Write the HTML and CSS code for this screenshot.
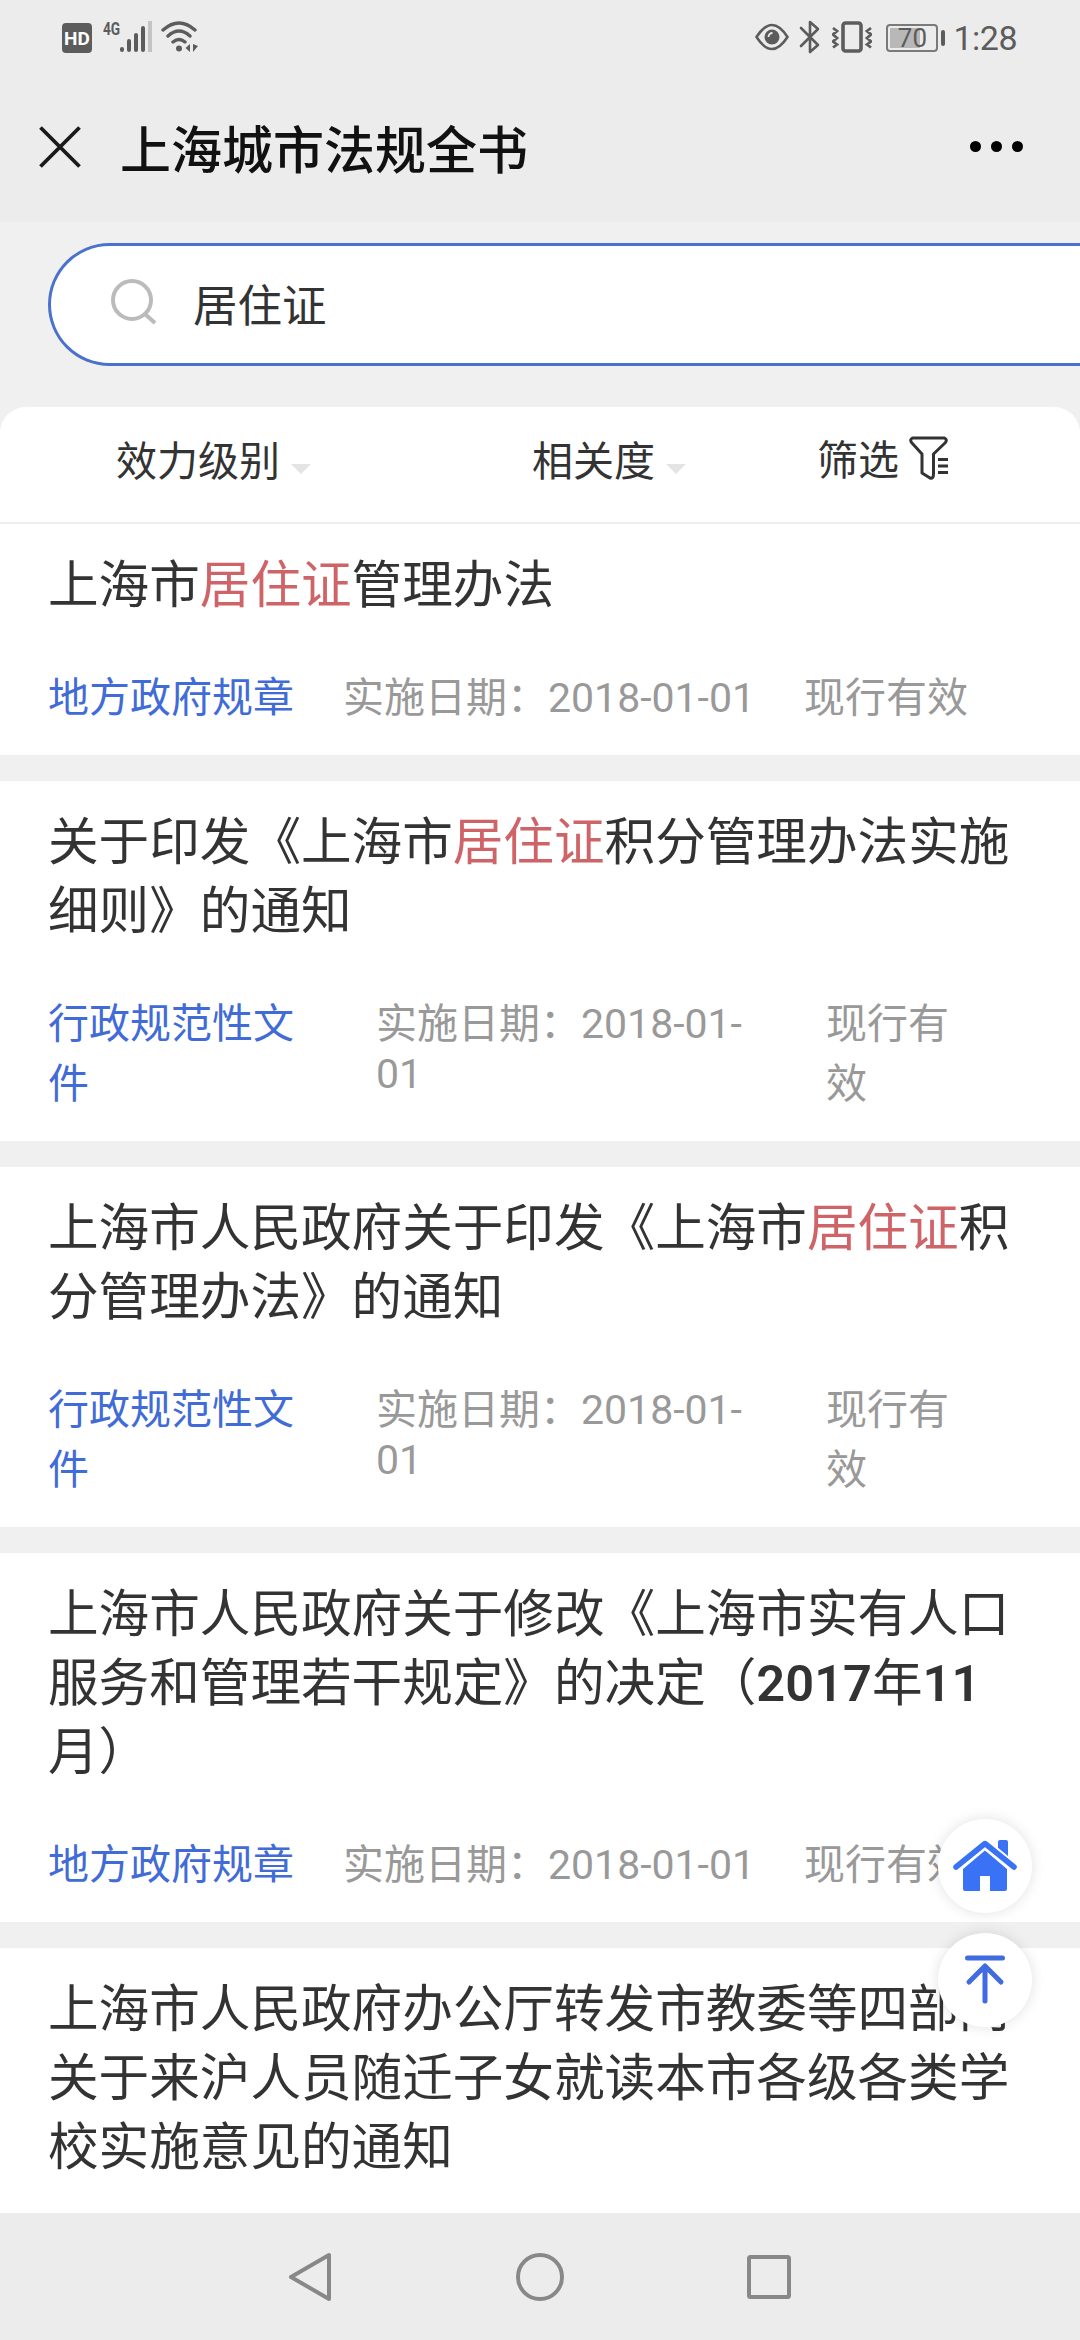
FILE: index.html
```html
<!DOCTYPE html>
<html lang="zh-CN">
<head>
  <meta charset="UTF-8" />
  <meta name="viewport" content="width=device-width, initial-scale=1.0"/>
  <title>上海城市法规全书</title>
  <link rel="stylesheet" href="styles.css">
</head>
<body>

  <div class="status-bar">
    <div class="status-left">
      <span class="hd">HD</span>
      <span class="net">4G</span>
      <svg class="signal" width="32" height="32" viewBox="0 0 32 32">
        <g stroke="#5c5c5c" stroke-width="4" stroke-linecap="round">
          <path d="M2 28v1M9 20v9M16 14v15M23 7v22"/>
        </g>
        <path d="M30 0v31" stroke="#c4c4c4" stroke-width="4"/>
      </svg>
      <svg class="wifi" width="38" height="32" viewBox="0 0 38 32">
        <g fill="none" stroke="#5c5c5c" stroke-width="3.4" stroke-linecap="round">
          <path d="M2 9Q18 -5 34 9M7 15Q18 5 29 15M12 21Q18 16 24 21"/>
        </g>
        <circle cx="18" cy="27.500" r="3" fill="#5c5c5c"/>
        <path d="M29 23v8l-4.500-4zM32 23v8l5-6z" fill="#5c5c5c"/>
      </svg>
    </div>
    <div class="status-right">
      <svg width="34" height="34" viewBox="0 0 34 34">
        <path d="M1.500 17Q17-7 32.500 17Q17 41 1.500 17z" fill="none" stroke="#5c5c5c" stroke-width="2.600" stroke-linejoin="round"/>
        <circle cx="17" cy="17" r="7.500" fill="#5c5c5c"/>
        <path d="M13.500 17a4 4 0 0 1 4-4" fill="none" stroke="#ececec" stroke-width="1.800"/>
      </svg>
      <svg class="bluetooth" width="22" height="34" viewBox="0 0 22 34">
        <path d="M2 8l17 17-8 7V2l8 7L2 26" fill="none" stroke="#5c5c5c" stroke-width="2.600" stroke-linejoin="round" stroke-linecap="round"/>
      </svg>
      <svg class="vibrate" width="40" height="34" viewBox="0 0 40 34">
        <rect x="11" y="3" width="18" height="28" rx="2.500" fill="none" stroke="#5c5c5c" stroke-width="3.600"/>
        <path d="M1 8l4 3-4 3.500 4 3.500-4 3.500 4 3-4 3M39 8l-4 3 4 3.500-4 3.500 4 3.500-4 3 4 3" fill="none" stroke="#5c5c5c" stroke-width="2.800"/>
      </svg>
      <span class="battery">70</span>
      <span class="time">1:28</span>
    </div>
  </div>

  <div class="title-bar">
    <svg class="close" width="42" height="42" viewBox="0 0 42 42">
      <path d="M1.500 1.500l39 39M40.500 1.500l-39 39" stroke="#1a1a1a" stroke-width="3.800"/>
    </svg>
    <h1>上海城市法规全书</h1>
    <div class="more"><i></i><i></i><i></i></div>
  </div>

  <div class="search-wrap">
    <div class="search">
      <svg width="46" height="46" viewBox="0 0 46 46">
        <g fill="none" stroke="#bbb" stroke-width="4">
          <circle cx="21" cy="21" r="19"/>
          <path d="M34 35l10 9"/>
        </g>
      </svg>
      <span>居住证</span>
    </div>
  </div>

  <div class="filters">
    <div class="filter level">效力级别<i class="arrow"></i></div>
    <div class="filter relate">相关度<i class="arrow"></i></div>
    <div class="filter pick">筛选
      <svg width="40" height="44" viewBox="0 0 40 44">
        <path d="M3.500 2h32q3 1.500 1 4.500L24.500 18v20q0 5-3.500 4L13 37V18L2.500 6.500q-2-3 1-4.500z" fill="none" stroke="#333" stroke-width="3" stroke-linejoin="round"/>
        <path d="M29 23.500h10M29 30h10M29 36.500h10" stroke="#333" stroke-width="3"/>
      </svg>
    </div>
  </div>

  <div class="list">
    <div class="item">
      <h2>上海市<em>居住证</em>管理办法</h2>
      <div class="meta">
        <span class="type">地方政府规章</span>
        <span class="date">实施日期：2018-01-01</span>
        <span class="state">现行有效</span>
      </div>
    </div>
    <div class="item">
      <h2>关于印发《上海市<em>居住证</em>积分管理办法实施细则》的通知</h2>
      <div class="meta wrap">
        <span class="type">行政规范性文件</span>
        <span class="date">实施日期：2018-01-01</span>
        <span class="state">现行有效</span>
      </div>
    </div>
    <div class="item">
      <h2>上海市人民政府关于印发《上海市<em>居住证</em>积分管理办法》的通知</h2>
      <div class="meta wrap">
        <span class="type">行政规范性文件</span>
        <span class="date">实施日期：2018-01-01</span>
        <span class="state">现行有效</span>
      </div>
    </div>
    <div class="item">
      <h2>上海市人民政府关于修改《上海市实有人口服务和管理若干规定》的决定（<b>2017</b>年<b>11</b>月）</h2>
      <div class="meta">
        <span class="type">地方政府规章</span>
        <span class="date">实施日期：2018-01-01</span>
        <span class="state">现行有效</span>
      </div>
    </div>
    <div class="item">
      <h2>上海市人民政府办公厅转发市教委等四部门关于来沪人员随迁子女就读本市各级各类学校实施意见的通知</h2>
    </div>
  </div>

  <div class="float-btns">
    <div class="float-btn">
      <svg width="64" height="52" viewBox="0 0 64 52">
        <g fill="#3a72f5">
          <path d="M45 2q0-2 2-2h6q2 0 2 2v20L45 13z"/>
          <path d="M10 29L32 10.500 54 29v20q0 2-2 2H37V36H27v15H12q-2 0-2-2z"/>
        </g>
        <path d="M3 27.500L32 3.500l29 24" fill="none" stroke="#fff" stroke-width="10"/>
        <path d="M3 27L32 3.500 61 27" fill="none" stroke="#3a72f5" stroke-width="5.500" stroke-linecap="round" stroke-linejoin="round"/>
      </svg>
    </div>
    <div class="float-btn">
      <svg width="42" height="50" viewBox="0 0 42 50">
        <path d="M3.500 3h35M21 12v34M5 27l16-16 16 16" fill="none" stroke="#416be0" stroke-width="5" stroke-linecap="round" stroke-linejoin="round"/>
      </svg>
    </div>
  </div>

  <div class="nav-bar">
    <svg width="48" height="52" viewBox="0 0 48 52">
      <path d="M42 4v44L4 26z" fill="none" stroke="#888" stroke-width="4" stroke-linejoin="round"/>
    </svg>
    <svg width="52" height="52" viewBox="0 0 52 52">
      <circle cx="26" cy="26" r="22" fill="none" stroke="#888" stroke-width="4"/>
    </svg>
    <svg width="48" height="48" viewBox="0 0 48 48">
      <rect x="4" y="4" width="40" height="40" rx="1.500" fill="none" stroke="#888" stroke-width="4"/>
    </svg>
  </div>

</body>
</html>
```
FILE: styles.css
```css
* {
  box-sizing: border-box;
  margin: 0;
  padding: 0;
}

body {
  width: 1080px;
  height: 2340px;
  display: flex;
  flex-direction: column;
  overflow: hidden;
  position: relative;
  font-family: Roboto, "Noto Sans CJK SC", sans-serif;
  color: #333;
  background: #f0f0f1;
  text-spacing-trim: space-all;
}

svg {
  display: block;
  flex: none;
}

/* status bar */
.status-bar {
  height: 74px;
  padding: 0 63px 0 62px;
  display: flex;
  justify-content: space-between;
  background: #ececec;
  color: #5c5c5c;
}

.status-left,
.status-right {
  display: flex;
  align-items: center;
}

.hd {
  width: 30px;
  height: 30px;
  margin-top: 2px;
  border-radius: 4px;
  background: #5c5c5c;
  color: #fff;
  font-size: 19px;
  font-weight: 700;
  line-height: 31px;
  text-align: center;
}

.net {
  width: 17px;
  margin: -17px 0 0 11px;
  font-size: 19px;
  font-weight: 700;
  transform: scaleX(0.72);
  transform-origin: left;
}

.wifi {
  margin-left: 9px;
}

.bluetooth {
  margin-left: 10px;
}

.vibrate {
  margin-left: 11px;
}

.battery {
  position: relative;
  width: 52px;
  height: 28px;
  margin: 2px 15px 0 14px;
  border: 2px solid #7a7a7a;
  border-radius: 4px;
  background: linear-gradient(#b8b8b8, #b8b8b8) 2px 2px / 30px 20px no-repeat;
  font-size: 26px;
  line-height: 25px;
  text-align: center;
}

.battery::after {
  content: "";
  position: absolute;
  right: -9px;
  top: 4px;
  width: 4px;
  height: 16px;
  border-radius: 2px;
  background: #5c5c5c;
}

.time {
  margin-top: 2px;
  font-size: 34px;
  letter-spacing: -0.5px;
}

/* title bar */
.title-bar {
  height: 148px;
  padding: 0 57px 3px 39px;
  display: flex;
  align-items: center;
  background: #ececec;
}

.title-bar h1 {
  margin-left: 39px;
  font-size: 51px;
  font-weight: 500;
  color: #111;
}

.more {
  margin-left: auto;
  display: flex;
  gap: 10px;
}

.more i {
  width: 11px;
  height: 11px;
  border-radius: 50%;
  background: #000;
}

/* search */
.search-wrap {
  height: 185px;
  padding: 21px 0 0 48px;
}

.search {
  height: 123px;
  padding: 0 0 5px 60px;
  display: flex;
  align-items: center;
  background: #fff;
  border: 3px solid #4a72cc;
  border-right: 0;
  border-radius: 62px 0 0 62px;
}

.search span {
  margin-left: 36px;
  font-size: 44.5px;
}

/* filters */
.filters {
  height: 117px;
  display: flex;
  align-items: center;
  padding: 0 131px 13px 116px;
  background: #fff;
  border-bottom: 2px solid #eee;
  border-radius: 26px 26px 0 0;
  font-size: 41px;
}

.filter {
  display: flex;
  align-items: center;
}

.arrow {
  margin: 22px 0 0 11px;
  border: 10px solid transparent;
  border-top-color: #e4e4e4;
  border-bottom: 0;
}

.relate {
  margin-left: 221px;
}

.pick {
  margin: -3px 0 0 auto;
}

.pick svg {
  margin: 3px 0 0 10px;
}

/* result list */
.list {
  flex: 1;
  overflow: hidden;
}

.item {
  padding: 27px 48px 31px;
  background: #fff;
  margin-bottom: 26px;
}

.item:last-child {
  height: 300px;
}

.item h2 {
  font-size: 50.6px;
  font-weight: 400;
  line-height: 69px;
}

.item em {
  font-style: normal;
  color: #cf6468;
}

.item b {
  font-weight: 600;
}

.meta {
  display: flex;
  align-items: flex-start;
  margin-top: 44px;
  font-size: 41px;
  color: #999;
}

.type {
  width: 246px;
  color: #416bd6;
}

.date {
  width: 412px;
  margin: 0 49px;
  white-space: nowrap;
}

.state {
  white-space: nowrap;
}

.wrap .date {
  width: 385px;
  margin: 0 65px 0 82px;
  white-space: normal;
}

.wrap .state {
  width: 140px;
  white-space: normal;
}

/* floating buttons */
.float-btns {
  position: absolute;
  right: 48px;
  top: 1819px;
  display: flex;
  flex-direction: column;
  gap: 20px;
}

.float-btn {
  width: 94px;
  height: 94px;
  display: flex;
  align-items: center;
  justify-content: center;
  background: #fff;
  border-radius: 50%;
  box-shadow: 0 0 14px rgba(0, 0, 0, 0.12);
}

/* android nav */
.nav-bar {
  height: 127px;
  padding: 0 287px;
  display: flex;
  align-items: center;
  justify-content: space-between;
  background: #ececec;
}
```
